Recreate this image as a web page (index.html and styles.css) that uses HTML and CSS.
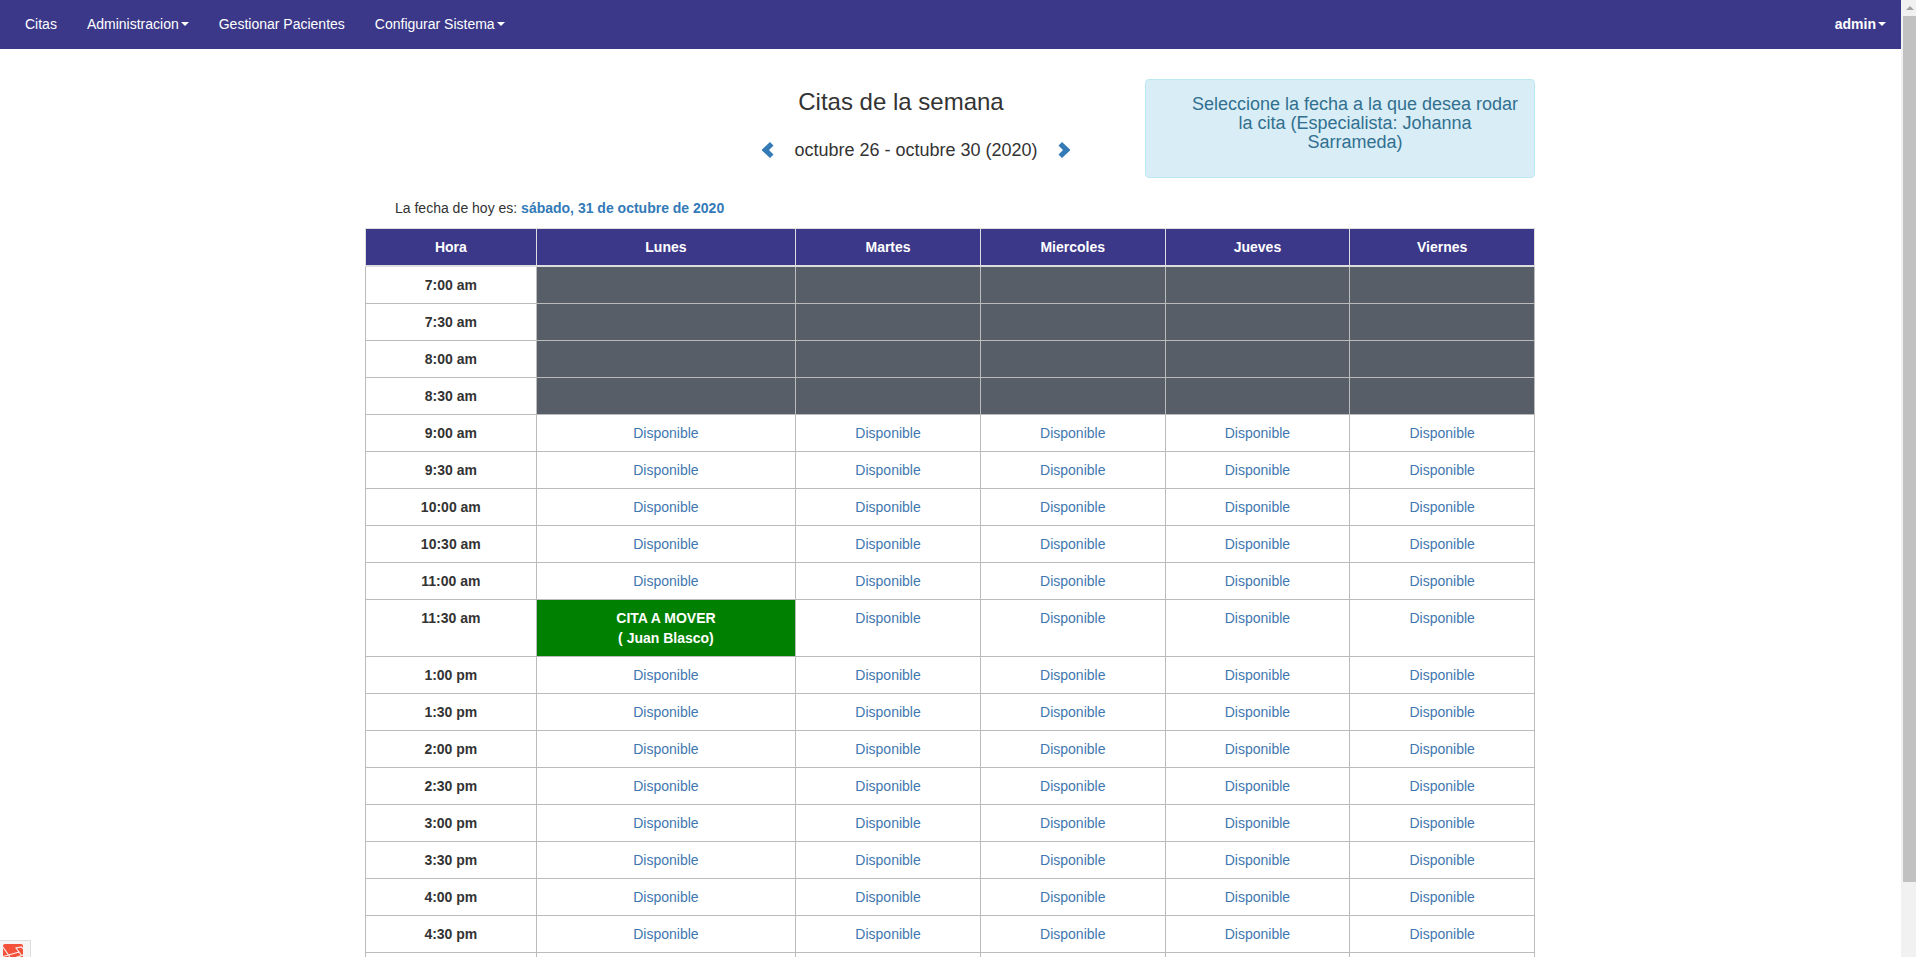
FILE: index.html
```html
<!DOCTYPE html>
<html lang="es">
<head>
<meta charset="utf-8">
<meta name="viewport" content="width=device-width, initial-scale=1">
<title>Citas de la semana</title>
<link rel="stylesheet" href="styles.css">
</head>
<body>
<div class="page">
  <nav class="navbar">
    <div class="nav-group">
      <a class="nav-link" href="#">Citas</a>
      <button class="nav-link" type="button">Administracion<span class="caret"></span></button>
      <a class="nav-link" href="#">Gestionar Pacientes</a>
      <button class="nav-link" type="button">Configurar Sistema<span class="caret"></span></button>
    </div>
    <button class="nav-link nav-user" type="button">admin<span class="caret"></span></button>
  </nav>
  <main class="content">
    <div class="container">
    <header class="week-header">
      <div class="week">
        <h3 class="week-title">Citas de la semana</h3>
        <div class="week-nav">
          <a class="week-arrow" href="#" aria-label="Semana anterior"><svg width="12" height="18" viewBox="0 0 12 18"><path d="M8 1 11.500 4.500 7 9 11.500 13.500 8 17 0 9.500V8.500Z"/></svg></a>
          <h4 class="week-range">octubre 26 - octubre 30 (2020)</h4>
          <a class="week-arrow" href="#" aria-label="Semana siguiente"><svg width="12" height="18" viewBox="0 0 12 18"><path d="M4 1 .5 4.500 5 9 .5 13.500 4 17 12 9.500V8.500Z"/></svg></a>
        </div>
      </div>
      <div class="alert" role="alert">Seleccione la fecha a la que desea rodar la cita (Especialista: Johanna Sarrameda)</div>
    </header>
    <p class="today">La fecha de hoy es: <strong>sábado, 31 de octubre de 2020</strong></p>
    <table class="schedule">
      <colgroup><col class="col-hour"><col class="col-monday"><col><col><col><col></colgroup>
      <thead>
        <tr><th>Hora</th><th>Lunes</th><th>Martes</th><th>Miercoles</th><th>Jueves</th><th>Viernes</th></tr>
      </thead>
      <tbody>
        <tr><th>7:00 am</th><td class="closed"></td><td class="closed"></td><td class="closed"></td><td class="closed"></td><td class="closed"></td></tr>
        <tr><th>7:30 am</th><td class="closed"></td><td class="closed"></td><td class="closed"></td><td class="closed"></td><td class="closed"></td></tr>
        <tr><th>8:00 am</th><td class="closed"></td><td class="closed"></td><td class="closed"></td><td class="closed"></td><td class="closed"></td></tr>
        <tr><th>8:30 am</th><td class="closed"></td><td class="closed"></td><td class="closed"></td><td class="closed"></td><td class="closed"></td></tr>
        <tr><th>9:00 am</th><td><a href="#">Disponible</a></td><td><a href="#">Disponible</a></td><td><a href="#">Disponible</a></td><td><a href="#">Disponible</a></td><td><a href="#">Disponible</a></td></tr>
        <tr><th>9:30 am</th><td><a href="#">Disponible</a></td><td><a href="#">Disponible</a></td><td><a href="#">Disponible</a></td><td><a href="#">Disponible</a></td><td><a href="#">Disponible</a></td></tr>
        <tr><th>10:00 am</th><td><a href="#">Disponible</a></td><td><a href="#">Disponible</a></td><td><a href="#">Disponible</a></td><td><a href="#">Disponible</a></td><td><a href="#">Disponible</a></td></tr>
        <tr><th>10:30 am</th><td><a href="#">Disponible</a></td><td><a href="#">Disponible</a></td><td><a href="#">Disponible</a></td><td><a href="#">Disponible</a></td><td><a href="#">Disponible</a></td></tr>
        <tr><th>11:00 am</th><td><a href="#">Disponible</a></td><td><a href="#">Disponible</a></td><td><a href="#">Disponible</a></td><td><a href="#">Disponible</a></td><td><a href="#">Disponible</a></td></tr>
        <tr><th>11:30 am</th><td class="moving">CITA A MOVER<br>( Juan Blasco)</td><td><a href="#">Disponible</a></td><td><a href="#">Disponible</a></td><td><a href="#">Disponible</a></td><td><a href="#">Disponible</a></td></tr>
        <tr><th>1:00 pm</th><td><a href="#">Disponible</a></td><td><a href="#">Disponible</a></td><td><a href="#">Disponible</a></td><td><a href="#">Disponible</a></td><td><a href="#">Disponible</a></td></tr>
        <tr><th>1:30 pm</th><td><a href="#">Disponible</a></td><td><a href="#">Disponible</a></td><td><a href="#">Disponible</a></td><td><a href="#">Disponible</a></td><td><a href="#">Disponible</a></td></tr>
        <tr><th>2:00 pm</th><td><a href="#">Disponible</a></td><td><a href="#">Disponible</a></td><td><a href="#">Disponible</a></td><td><a href="#">Disponible</a></td><td><a href="#">Disponible</a></td></tr>
        <tr><th>2:30 pm</th><td><a href="#">Disponible</a></td><td><a href="#">Disponible</a></td><td><a href="#">Disponible</a></td><td><a href="#">Disponible</a></td><td><a href="#">Disponible</a></td></tr>
        <tr><th>3:00 pm</th><td><a href="#">Disponible</a></td><td><a href="#">Disponible</a></td><td><a href="#">Disponible</a></td><td><a href="#">Disponible</a></td><td><a href="#">Disponible</a></td></tr>
        <tr><th>3:30 pm</th><td><a href="#">Disponible</a></td><td><a href="#">Disponible</a></td><td><a href="#">Disponible</a></td><td><a href="#">Disponible</a></td><td><a href="#">Disponible</a></td></tr>
        <tr><th>4:00 pm</th><td><a href="#">Disponible</a></td><td><a href="#">Disponible</a></td><td><a href="#">Disponible</a></td><td><a href="#">Disponible</a></td><td><a href="#">Disponible</a></td></tr>
        <tr><th>4:30 pm</th><td><a href="#">Disponible</a></td><td><a href="#">Disponible</a></td><td><a href="#">Disponible</a></td><td><a href="#">Disponible</a></td><td><a href="#">Disponible</a></td></tr>
        <tr><th></th><td></td><td></td><td></td><td></td><td></td></tr>
      </tbody>
    </table>
    </div>
  </main>
</div>
<div class="scrollbar" aria-hidden="true">
  <svg class="scroll-up" width="15" height="16" viewBox="0 0 15 16"><path d="M5 10 9 6 13 10Z"/></svg>
  <div class="scroll-track"><div class="scroll-thumb"></div></div>
</div>
<button class="debug-tab" type="button" aria-label="Barra de depuración">
  <svg width="20" height="20" viewBox="0 0 20 20"><rect width="20" height="20" rx="2" fill="#f4513b"/><path d="M0 3 5.500 11 16 8 13 4 18.500 3 20 5M5.500 11 0 12.500M5.500 11 8 15 20 11M16 8 19 12" fill="none" stroke="#fbe9e5" stroke-width="1.200"/></svg>
</button>
</body>
</html>
```

FILE: styles.css
```css
* {
  box-sizing: border-box;
}

body {
  margin: 0;
  height: 100vh;
  display: flex;
  overflow: hidden;
  background: #fff;
  color: #333;
  font: 14px/20px "Liberation Sans", Arial, sans-serif;
}

a {
  color: #337ab7;
  text-decoration: none;
}

.page {
  flex: 1;
  min-width: 0;
  overflow: hidden;
}

/* Navigation */
.navbar {
  display: flex;
  justify-content: space-between;
  padding-left: 10px;
  background: #3b3889;
}

.nav-group {
  display: flex;
}

.nav-link {
  display: flex;
  align-items: center;
  gap: 2px;
  padding: 14px 15px 15px;
  border: 0;
  background: none;
  color: #fff;
  font: inherit;
  cursor: pointer;
}

.nav-user {
  font-weight: bold;
}

.caret {
  border: 4px solid transparent;
  border-top-color: currentColor;
  border-bottom: 0;
}

/* Week heading */
.content {
  padding: 30px 1px 0 0;
}

.container {
  max-width: 1170px;
  margin: 0 auto;
}

.week-header {
  display: grid;
  grid-template-columns: repeat(3, 1fr);
}

.week {
  grid-column: 2;
  padding-top: 10px;
  text-align: center;
}

.week-title {
  margin: 0 98px 25px 0;
  font-size: 24px;
  line-height: 26px;
  font-weight: normal;
}

.week-nav {
  display: flex;
  justify-content: center;
  align-items: center;
  gap: 20px;
  margin-right: 68px;
}

.week-range {
  margin: 0;
  font-size: 18px;
  line-height: 20px;
  font-weight: normal;
}

.week-arrow {
  display: flex;
  fill: #337ab7;
}

.alert {
  padding: 15px 15px 25px 45px;
  border: 1px solid #bce8f1;
  border-radius: 4px;
  background: #d9edf7;
  color: #31708f;
  font-size: 18px;
  line-height: 19px;
  text-align: center;
}

.today {
  margin: 20px 0 10px;
  padding-left: 30px;
}

.today strong {
  color: #337ab7;
}

/* Schedule */
.schedule {
  width: 100%;
  table-layout: fixed;
  border-collapse: collapse;
  text-align: center;
}

.col-hour {
  width: 14.6%;
}

.col-monday {
  width: 22.2%;
}

.schedule th,
.schedule td {
  height: 37px;
  padding: 8px;
  border: 1px solid #bbb;
  vertical-align: top;
}

.schedule thead th {
  border-color: #ddd;
  border-bottom: 2px solid #ddd;
  background: #3b3889;
  color: #fff;
}

.schedule td a {
  color: #3f77b0;
}

.schedule .closed {
  background: #585e68;
}

.schedule .moving {
  background: #008000;
  color: #fff;
  font-weight: bold;
}

/* Scrollbar */
.scrollbar {
  display: flex;
  flex-direction: column;
  width: 15px;
  background: #f1f1f1;
}

.scroll-up {
  fill: #a3a3a3;
}

.scroll-track {
  flex: 1;
  padding-left: 2px;
}

.scroll-thumb {
  height: 92%;
  background: #c1c1c1;
}

/* Collapsed debug bar */
.debug-tab {
  position: fixed;
  left: 0;
  bottom: -11px;
  display: flex;
  padding: 3px 7px 3px 3px;
  border: 1px solid #ddd;
  border-left: 0;
  background: #f5f5f5;
}
```
